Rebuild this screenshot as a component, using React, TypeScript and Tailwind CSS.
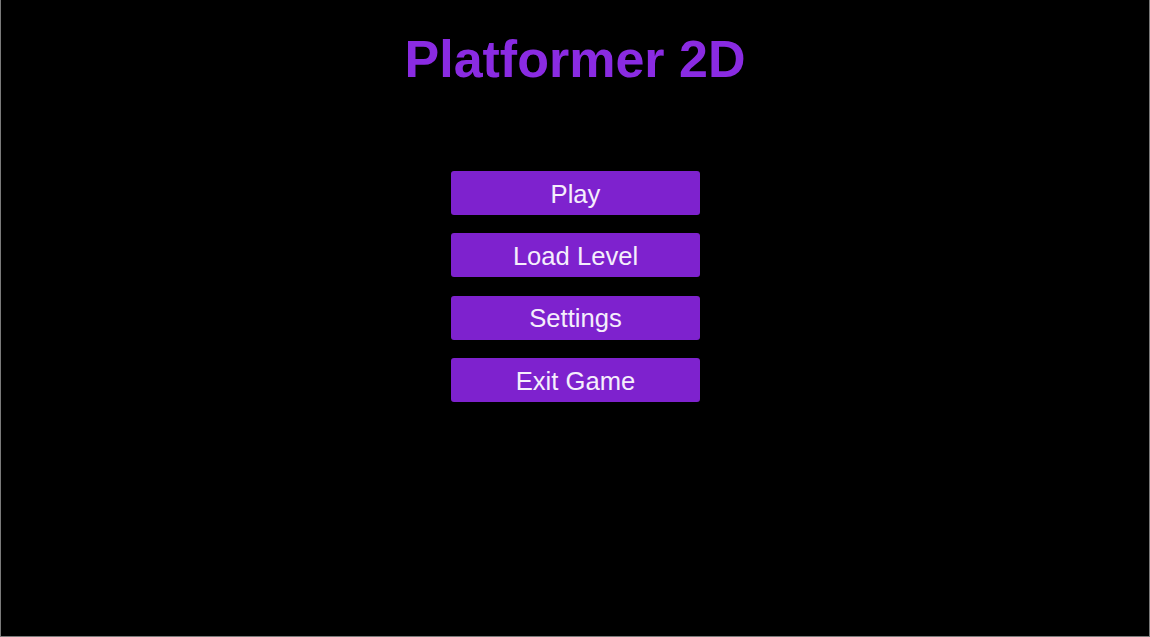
const menuItems = ["Play", "Load Level", "Settings", "Exit Game"]

export default function App() {
  return (
    <div
      className="h-[637px] w-[1150px] bg-black border-x border-b border-[#7a7a7a] flex flex-col items-center"
      style={{ fontFamily: '"Liberation Sans", Arial, sans-serif' }}
    >
      {/* Title */}
      <h1 className="mt-[33px] text-[52px] leading-[52px] font-bold text-[#8a2be2]">
        Platformer 2D
      </h1>

      {/* Main menu */}
      <nav className="mt-[86px] flex flex-col gap-[18.4px] pl-[1px]">
        {menuItems.map((label) => (
          <button
            key={label}
            className="w-[249px] h-[44px] pt-[3px] rounded-[3px] bg-[#7e22ce] text-[#f5eefc] text-[25.6px] leading-none"
          >
            {label}
          </button>
        ))}
      </nav>
    </div>
  )
}
